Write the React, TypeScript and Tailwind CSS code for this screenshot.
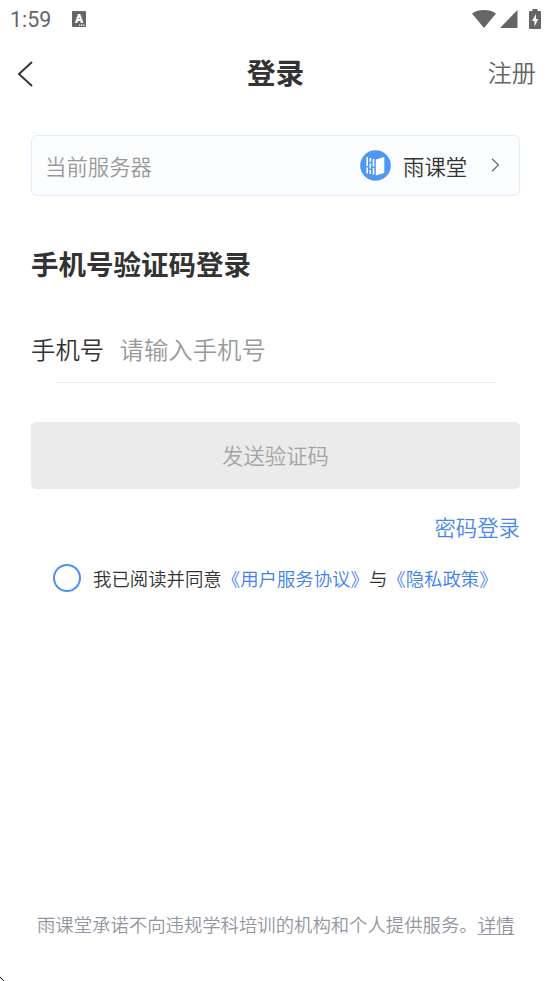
import { useState } from "react";

const StatusBar = () => {
    return (
        <div className="flex h-[38px] items-center justify-between pl-2.5 pr-2.5 text-[#666666]">
            <div className="flex items-center">
                <span className="w-[62px] pt-px font-['Roboto',sans-serif] text-[21.4px] font-normal leading-[37px]">
                    1:59
                </span>
                <svg width="14" height="16" viewBox="0 0 14 16">
                    <rect width="14" height="16" rx="1" fill="#666666" />
                    <text
                        x="7"
                        y="12"
                        textAnchor="middle"
                        fill="#fff"
                        className="font-['Roboto',sans-serif] text-[12px] font-black"
                    >
                        A
                    </text>
                    <path
                        d="M7 14.200h6"
                        stroke="#fff"
                        strokeWidth="1.200"
                        strokeDasharray="1.400 0.700"
                    />
                </svg>
            </div>
            <div className="flex items-center">
                <svg width="24" height="18" viewBox="0 0 24 18" fill="currentColor">
                    <path d="M0 3.400C3.300 1.200 7.300 0 12 0s8.700 1.200 12 3.400L12 18z" />
                </svg>
                <svg
                    className="ml-1"
                    width="18"
                    height="18"
                    viewBox="0 0 18 18"
                    fill="currentColor"
                >
                    <path d="M17.500 0v18H0z" />
                </svg>
                <svg
                    className="ml-[11px]"
                    width="12"
                    height="20"
                    viewBox="0 0 12 20"
                    fill="currentColor"
                >
                    <path d="M3.500 0h5v2H11q1 0 1 1v16q0 1-1 1H1q-1 0-1-1V3q0-1 1-1h2.500z" />
                    <path d="M7 5 3 12H5.500v5.500L9.300 10H7z" fill="#fff" />
                </svg>
            </div>
        </div>
    );
};

const ServerLogo = () => {
    return (
        <svg width="31" height="31" viewBox="0 0 31 31">
            <circle cx="15.500" cy="15.500" r="15.300" fill="#5096f5" />
            <path d="M15.800 9.500 24.300 7v16l-8.500 2.500z" fill="#fff" />
            <path
                d="M7.200 7v9M7.200 17.500v6M10.300 8v4M10.300 13.500v5M10.300 20v4M13.500 9v7.500M13.500 18v6.500"
                stroke="#fff"
                strokeWidth="1.600"
            />
        </svg>
    );
};

const App = () => {
    const [phone, setPhone] = useState("");
    const [isAgreed, setIsAgreed] = useState(false);

    return (
        <div className="relative flex h-[981px] w-[551px] flex-col overflow-hidden bg-white font-['Noto_Sans_CJK_SC',sans-serif] font-[350] text-[#333333]">
            <StatusBar />

            <header className="grid h-[68px] grid-cols-[80px_1fr_80px] items-center pl-[17px] pr-[15px]">
                <button aria-label="返回" className="pt-1">
                    <svg width="16" height="26" viewBox="0 0 16 26" fill="none">
                        <path d="M15 1 2 13 15 25" stroke="#333333" strokeWidth="1.900" />
                    </svg>
                </button>
                <h1 className="pr-0.5 text-center text-[28.8px] font-bold leading-10">
                    登录
                </h1>
                <button className="text-right text-[24.2px] leading-10 text-[#666666]">
                    注册
                </button>
            </header>

            <main className="flex flex-col px-[31px] pt-[29px]">
                <button className="flex h-[61px] items-center rounded-[6px] border border-[#e2edfd] bg-[#fcfdff] pl-[13px] pr-[19px] text-[21.4px]">
                    <span className="pt-px text-[#999999]">当前服务器</span>
                    <span className="ml-auto flex items-center">
                        <ServerLogo />
                        <span className="ml-3 w-[88px] pt-px text-left">雨课堂</span>
                        <svg width="9" height="14" viewBox="0 0 9 14" fill="none">
                            <path d="m1 .7 6.500 6.300L1 13.300" stroke="#666666" strokeWidth="1.200" />
                        </svg>
                    </span>
                </button>

                <h2 className="mt-[47px] text-[27.5px] font-bold leading-10">
                    手机号验证码登录
                </h2>

                <div className="mt-[46px] flex h-10 items-center text-[24.4px]">
                    <label htmlFor="phone" className="w-[88.5px] leading-10">
                        手机号
                    </label>
                    <input
                        id="phone"
                        className="h-10 min-w-0 flex-1 pb-0.5 outline-none placeholder:text-[#999999]"
                        placeholder="请输入手机号"
                        value={phone}
                        onChange={(e) => setPhone(e.target.value)}
                    />
                </div>
                <div className="mx-6 mt-[13px] h-px bg-[#ebebeb]" />

                <button className="mt-[39px] h-[67px] rounded-[5px] bg-[#ebebeb] text-[21.4px] text-[#a3a3a3]">
                    发送验证码
                </button>
                <button className="mt-[22px] self-end text-[21.4px] leading-[31px] text-[#4a86f0]">
                    密码登录
                </button>

                <div className="mt-[22px] flex h-7 items-center pl-[22px] text-[18.4px]">
                    <button
                        aria-label="同意协议"
                        className={
                            isAgreed
                                ? "size-7 rounded-full border-2 border-[#508efa] bg-[#508efa]"
                                : "size-7 rounded-full border-2 border-[#508efa]"
                        }
                        onClick={() => setIsAgreed(!isAgreed)}
                    />
                    <p className="ml-3 whitespace-nowrap pt-px">
                        我已阅读并同意
                        <span className="text-[#3f7ff0]">《用户服务协议》</span>与
                        <span className="text-[#3f7ff0]">《隐私政策》</span>
                    </p>
                </div>
            </main>

            <footer className="mb-[42px] mt-auto whitespace-nowrap pl-[37px] text-[18.36px] leading-[30px] text-[#9296a0]">
                雨课堂承诺不向违规学科培训的机构和个人提供服务。
                <span className="underline decoration-1 underline-offset-2">详情</span>
            </footer>

            <svg
                className="absolute bottom-0 left-0"
                width="4"
                height="4"
                viewBox="0 0 4 4"
                shapeRendering="crispEdges"
            >
                <path d="M0 0h1v1H0zM1 1h1v1H1zM2 2h1v1H2zM3 3h1v1H3z" fill="#111" />
            </svg>
        </div>
    );
};

export default App;
